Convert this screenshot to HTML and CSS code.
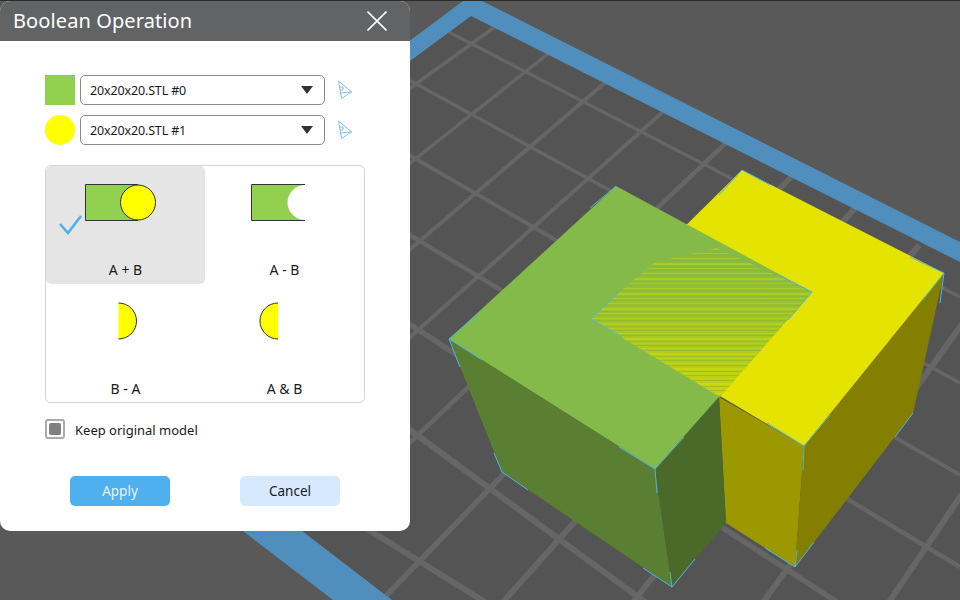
FILE: index.html
```html
<!DOCTYPE html>
<html lang="en">
<head>
  <meta charset="UTF-8">
  <title>Boolean Operation</title>
  <link rel="stylesheet" href="styles.css">
</head>
<body>
  <!-- 3D viewport -->
  <svg class="scene" width="960" height="600" viewBox="0 0 960 600">
    <defs>
      <linearGradient id="overlap" x1="0" y1="248" x2="0" y2="397" gradientUnits="userSpaceOnUse">
        <stop offset="0" stop-color="#86ba44"/>
        <stop offset="0.45" stop-color="#9cc32a"/>
        <stop offset="1" stop-color="#c8d410"/>
      </linearGradient>
      <pattern id="stripes" width="37" height="15" patternUnits="userSpaceOnUse">
        <rect y="0" width="37" height="1" fill="#84b83f" fill-opacity="0.6"/>
        <rect y="3" width="37" height="1" fill="#dede08" fill-opacity="0.35"/>
        <rect y="5" width="37" height="1" fill="#7fb33c" fill-opacity="0.5"/>
        <rect y="8" width="37" height="2" fill="#e2e204" fill-opacity="0.35"/>
        <rect y="11" width="37" height="1" fill="#84b83f" fill-opacity="0.55"/>
        <rect y="13" width="37" height="1" fill="#dede08" fill-opacity="0.3"/>
      </pattern>
    </defs>

    <rect width="960" height="600" fill="#595959"/>
    <rect width="960" height="1" fill="#2b2b2b"/>
    <polygon points="471,16 960,262 960,600 392,600 302,531 300,142" fill="#545454"/>

    <g class="grid">
      <line x1="447" y1="31" x2="960" y2="297" stroke-width="3.5"/>
      <line x1="380" y1="64" x2="960" y2="383" stroke-width="3.5"/>
      <line x1="380" y1="138" x2="960" y2="475" stroke-width="4"/>
      <line x1="380" y1="217" x2="960" y2="567" stroke-width="4.5"/>
      <line x1="380" y1="305" x2="840" y2="604" stroke-width="5.5"/>
      <line x1="380" y1="408" x2="645" y2="602" stroke-width="6"/>
      <line x1="340" y1="512" x2="485" y2="602" stroke-width="6"/>
      <line x1="496" y1="26" x2="380" y2="110" stroke-width="3.5"/>
      <line x1="549" y1="53" x2="380" y2="187" stroke-width="3.5"/>
      <line x1="607" y1="81" x2="380" y2="275" stroke-width="4"/>
      <line x1="665" y1="110" x2="380" y2="364" stroke-width="4"/>
      <line x1="728" y1="141" x2="380" y2="471" stroke-width="4.5"/>
      <line x1="793" y1="175" x2="380" y2="602" stroke-width="5.5"/>
      <line x1="856" y1="207" x2="503" y2="602" stroke-width="6"/>
      <line x1="919" y1="245" x2="633" y2="602" stroke-width="6"/>
      <line x1="962" y1="324" x2="754" y2="615" stroke-width="6"/>
      <line x1="962" y1="494" x2="889" y2="602" stroke-width="6"/>
    </g>

    <polygon class="bed" points="463,1 482,1 960,242 960,262 471,16 410,61 380,83 380,63"/>
    <polygon class="bed" points="243,531 302,531 392,600 333,600"/>

    <!-- yellow model -->
    <polygon fill="#9c9800" points="719,397 804,446 795,567 726,523"/>
    <polygon fill="#857f00" points="804,446 944,273 913,413 795,567"/>
    <polygon fill="#e4e400" points="742,170 944,273 804,446 591,319"/>

    <!-- green model -->
    <polygon fill="#5b7f32" points="449,339 655,469 672,587 502,472"/>
    <polygon fill="#4b6a2a" points="655,469 719,397 726,523 672,587"/>
    <polygon fill="#84ba4a" points="616,186 812,292 655,469 449,339"/>

    <!-- z-fighting where the two top faces overlap -->
    <polygon fill="url(#overlap)" points="591,319 618,293 655,262 717,248 812,292 720,397"/>
    <polygon fill="url(#stripes)" points="591,319 618,293 655,262 717,248 812,292 720,397"/>

    <g class="edges">
      <polyline points="590,208 616,186"/>
      <polyline points="480,312 449,339 482,360"/>
      <polyline points="449,339 460,367"/>
      <polyline points="719,195 742,170 770,185"/>
      <polyline points="910,257 944,273 923,300"/>
      <polyline points="944,273 940,303"/>
      <polyline points="767,423 804,446 830,415"/>
      <polyline points="804,446 803,470"/>
      <polyline points="913,413 895,437"/>
      <polyline points="619,447 655,469 684,437"/>
      <polyline points="655,469 657,493"/>
      <polyline points="494,453 502,472 528,490"/>
      <polyline points="643,568 672,587 695,559"/>
      <polyline points="670,572 672,587"/>
      <polyline points="765,548 795,567 814,542"/>
      <polyline points="797,550 795,567"/>
      <polyline points="618,293 591,319 622,337"/>
      <polyline points="777,274 812,292 788,320"/>
    </g>
  </svg>

  <div class="dialog">
    <div class="title-bar">
      <span class="title">Boolean Operation</span>
      <svg class="close" width="20" height="20" viewBox="0 0 20 20">
        <path d="M0.5 0.5 L19.5 19.5 M19.5 0.5 L0.5 19.5"/>
      </svg>
    </div>

    <div class="body">
      <div class="model-row">
        <div class="swatch"></div>
        <div class="select"><span>20x20x20.STL #0</span><i class="arrow"></i></div>
        <svg class="pick" width="16" height="20" viewBox="0 0 16 20">
          <path d="M1.5 1 L14.5 12 L4.5 18.5 Z M2.5 13 L14.5 12 M3 7 H6 V10 H3"/>
        </svg>
      </div>
      <div class="model-row">
        <div class="swatch round"></div>
        <div class="select"><span>20x20x20.STL #1</span><i class="arrow"></i></div>
        <svg class="pick" width="16" height="20" viewBox="0 0 16 20">
          <path d="M1.5 1 L14.5 12 L4.5 18.5 Z M2.5 13 L14.5 12 M3 7 H6 V10 H3"/>
        </svg>
      </div>

      <div class="ops">
        <div class="op selected">
          <svg class="op-icon" width="159" height="80" viewBox="0 0 159 80">
            <path class="a" d="M92 18.500 H39.500 V54.500 H92"/>
            <circle class="b" cx="92" cy="36.500" r="17.500"/>
          </svg>
          <svg class="check" width="26" height="22" viewBox="0 0 26 22">
            <path d="M2 10 L10 19 L23 2"/>
          </svg>
          <span class="op-label">A + B</span>
        </div>
        <div class="op">
          <svg class="op-icon" width="159" height="80" viewBox="0 0 159 80">
            <path class="a" d="M100 18.500 H46.500 V54.500 H100"/>
            <path class="cut" d="M100 19 A17.500 17.500 0 0 0 100 54 H102 V19 Z"/>
          </svg>
          <span class="op-label">A - B</span>
        </div>
        <div class="op">
          <svg class="op-icon" width="159" height="80" viewBox="0 0 159 80">
            <path class="half" d="M72.500 19 A18 18 0 0 1 72.500 55"/>
          </svg>
          <span class="op-label">B - A</span>
        </div>
        <div class="op">
          <svg class="op-icon" width="159" height="80" viewBox="0 0 159 80">
            <path class="half" d="M73 19 A18 18 0 0 0 73 55"/>
          </svg>
          <span class="op-label">A &amp; B</span>
        </div>
      </div>

      <div class="keep">
        <div class="checkbox"><div class="checkbox-fill"></div></div>
        <span class="keep-label">Keep original model</span>
      </div>

      <div class="actions">
        <button class="btn apply">Apply</button>
        <button class="btn cancel">Cancel</button>
      </div>
    </div>
  </div>
</body>
</html>
```

FILE: styles.css
```css
body {
  margin: 0;
  width: 960px;
  height: 600px;
  overflow: hidden;
  background: #595959;
  font-family: "Noto Sans", "Open Sans", sans-serif;
  color: #1a1a1a;
}
.scene {
  position: absolute;
  left: 0;
  top: 0;
}
.grid line {
  stroke: #666666;
}
.bed {
  fill: #508fbd;
}
.edges polyline {
  fill: none;
  stroke: #4db3ee;
  stroke-width: 1;
}
.dialog {
  position: absolute;
  left: 0;
  top: 1px;
  width: 410px;
  height: 530px;
  background: #fff;
  border-radius: 10px;
  overflow: hidden;
}
.title-bar {
  height: 40px;
  background: #626365;
  display: flex;
  align-items: center;
  justify-content: space-between;
  padding: 0 23px 0 13px;
}
.title {
  color: #fff;
  font-size: 20px;
  letter-spacing: 0.1px;
  margin-top: -2px;
}
.close path {
  fill: none;
  stroke: #fff;
  stroke-width: 1.6;
}
.body {
  padding: 34px 45px 0;
}
.model-row {
  display: flex;
  align-items: center;
  height: 30px;
  margin-bottom: 10px;
}
.swatch {
  width: 30px;
  height: 30px;
  background: #92d050;
  flex-shrink: 0;
}
.swatch.round {
  background: #ffff00;
  border-radius: 50%;
}
.select {
  width: 245px;
  height: 30px;
  box-sizing: border-box;
  margin-left: 5px;
  padding: 0 11px 0 9px;
  border: 1px solid #8a8a8a;
  border-radius: 5px;
  display: flex;
  align-items: center;
  justify-content: space-between;
  font-size: 12.5px;
  letter-spacing: -0.15px;
}
.arrow {
  width: 0;
  height: 0;
  border-left: 6.5px solid transparent;
  border-right: 6.5px solid transparent;
  border-top: 8px solid #333;
}
.pick {
  margin-left: 12px;
}
.pick path {
  fill: none;
  stroke: #7cc4f4;
  stroke-width: 1;
}
.ops {
  width: 320px;
  height: 238px;
  box-sizing: border-box;
  margin-top: 20px;
  border: 1px solid #d5d5d5;
  border-radius: 5px;
  display: grid;
  grid-template-columns: 159px 159px;
  grid-template-rows: 118px 118px;
}
.op {
  position: relative;
  display: flex;
  flex-direction: column;
  align-items: center;
  border-radius: 5px;
}
.op.selected {
  background: #e5e5e5;
}
.op-icon {
  flex-shrink: 0;
}
.a {
  fill: #92d050;
  stroke: #333;
  stroke-width: 1;
}
.b,
.half {
  fill: #ffff00;
  stroke: #333;
  stroke-width: 1;
}
.cut {
  fill: #fff;
}
.check {
  position: absolute;
  left: 12px;
  top: 48px;
}
.check path {
  fill: none;
  stroke: #4fb0f0;
  stroke-width: 2.6;
}
.op-label {
  margin-top: 15px;
  font-size: 14px;
  line-height: 18px;
}
.op:nth-child(n+3) .op-label {
  margin-top: 16px;
}
.keep {
  display: flex;
  align-items: center;
  gap: 10px;
  margin-top: 16px;
  font-size: 13px;
}
.keep-label {
  padding-top: 1px;
}
.checkbox {
  width: 20px;
  height: 20px;
  box-sizing: border-box;
  border: 2px solid #aaaaaa;
  border-radius: 3px;
  padding: 2px;
}
.checkbox-fill {
  width: 12px;
  height: 12px;
  background: #808080;
  border-radius: 2px;
}
.actions {
  display: flex;
  gap: 70px;
  margin: 37px 0 0 25px;
}
.btn {
  width: 100px;
  height: 30px;
  border: none;
  border-radius: 5px;
  font-family: inherit;
  font-size: 13.5px;
  padding: 0;
}
.apply {
  background: #4fb0f0;
  color: #e6f3ff;
}
.cancel {
  background: #d7e9ff;
  color: #1a1a1a;
}
```
